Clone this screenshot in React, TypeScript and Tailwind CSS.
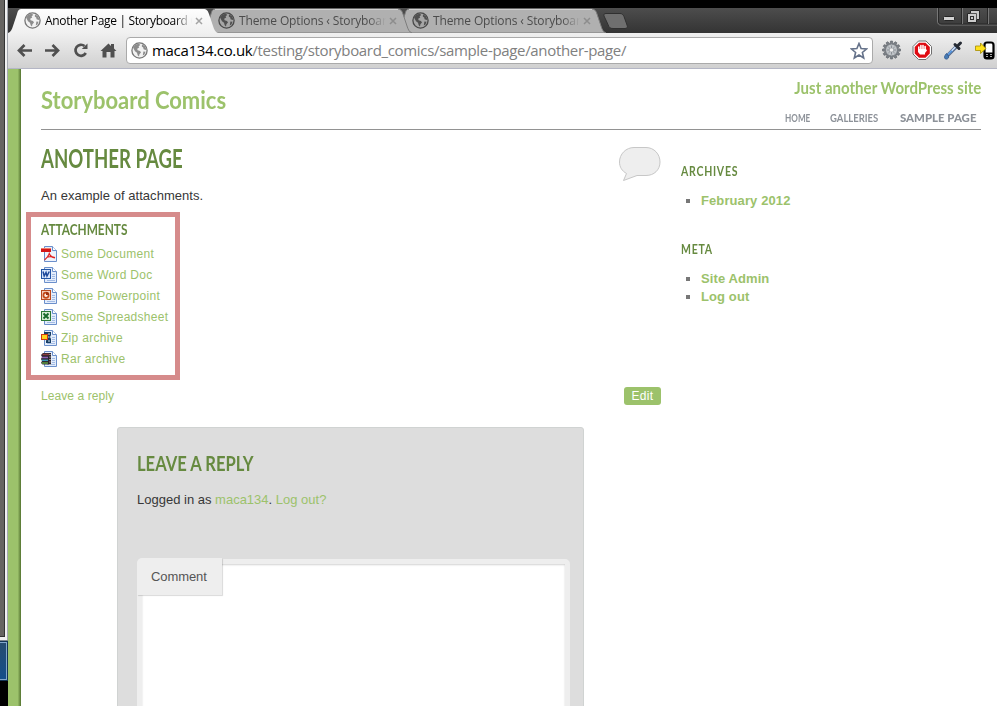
import React from 'react';

const ui = "font-['Open_Sans','Noto_Sans',sans-serif]";
const hand = "font-['Lato','Open_Sans',sans-serif]";

function Globe({ dark = false }: { dark?: boolean }) {
  return (
    <svg width="17" height="17" viewBox="0 0 17 17" className="shrink-0">
      <circle cx="8.5" cy="8.5" r="7.6" fill={dark ? '#a6a6a6' : '#f2f2f2'} stroke={dark ? '#484848' : '#777'} strokeWidth="1.3" />
      <path d="M2 5.5 4.5 2.6 8 1.8 9.3 3 7.6 4.2 8.2 5.5 6.2 6.8 6.6 8.3 9 9 10 10.6 8.4 12.2 8 14.6 6.7 13.2 6 10.8 4 9.2Z M11 2.2 14 4.2 15.4 7.2 14.6 8 12.6 7.2 12.2 5.4 10.8 4.6Z M12.4 9.4 14.6 9.8 13.4 12.6 11.8 13.4Z" fill={dark ? '#505050' : '#8c8c8c'} />
    </svg>
  );
}

function Tab({ title, active = false, className = '' }: { title: string; active?: boolean; className?: string }) {
  return (
    <div className={`relative h-[25px] w-[210px] shrink-0 ${className}`}>
      <svg className="absolute inset-0" width="210" height="25" viewBox="0 0 210 25">
        <defs>
          <linearGradient id="tabOn" x1="0" y1="0" x2="0" y2="1">
            <stop offset="0" stopColor="#fdfdfd" />
            <stop offset="1" stopColor="#f0f0f0" />
          </linearGradient>
        </defs>
        <path
          d="M0 25 C3 24 4 21 5 18 L9 6 C10 2 11 1 14 1 H195 C199 1 200 3 201 6 L205 18 C206 21 207 24 210 25Z"
          fill={active ? 'url(#tabOn)' : '#b0b0b0'}
          stroke={active ? 'none' : '#7d7d7d'}
          strokeWidth="1"
        />
        {!active && <path d="M13 1.5H196" stroke="#cfcfcf" />}
      </svg>
      <div className="relative flex h-[25px] items-center pl-4">
        <Globe dark={!active} />
        <div
          className={`ml-[4px] w-[147px] overflow-hidden whitespace-nowrap text-[12px] leading-[20px] [mask-image:linear-gradient(to_right,black_88%,transparent_100%)] ${active ? 'tracking-[-0.34px] text-black' : 'tracking-[-0.13px] text-[#4c4c4c]'}`}
        >
          {title}
        </div>
        <svg width="8" height="8" viewBox="0 0 8 8" className="ml-[3px]">
          <path d="M1 1 7 7M7 1 1 7" stroke={active ? '#a3a3a3' : '#8d8d8d'} strokeWidth="1.5" />
        </svg>
      </div>
    </div>
  );
}

function TabStrip() {
  return (
    <div className="flex h-[25px] bg-linear-to-b from-[#4d4d4d] to-[#343434]">
      <Tab title="Another Page | Storyboard Comics" active className="z-20" />
      <Tab title="Theme Options ‹ Storyboard" className="z-10 ml-[-16px]" />
      <Tab title="Theme Options ‹ Storyboard" className="ml-[-16px]" />
      <svg width="28" height="25" viewBox="0 0 28 25" className="ml-[-5px]">
        <path d="M5 5.500H19C21 5.500 22 6.500 23 8.500L26 17C27 19 26 20.500 24 20.500H12C9 20.500 8 19.500 7 16.500L3 8C2.500 6.500 3 5.500 5 5.500Z" fill="#6f6f6f" stroke="#303030" />
      </svg>
      <svg width="62" height="20" viewBox="0 0 62 20" className="ml-auto">
        <path d="M2.500 0V13C2.500 16 4 17 6 17H62" fill="none" stroke="#777" />
        <path d="M3.500 0V13C3.500 15 5 16 7 16H62M26.500 0V16M52.500 0V16" fill="none" stroke="#282828" />
        <path d="M27.500 0V16M53.500 0V16" stroke="#777" />
        <rect x="8.500" y="8.500" width="11" height="4" rx="1" fill="#d2d2d2" stroke="#252525" />
        <path d="M35.500 2.500H44.500V11.500H41.500V14.500H32.500V5.500H35.500Z" fill="#ccc" stroke="#252525" />
        <path d="M35.500 5.500H41.500V11.500" fill="none" stroke="#555" />
        <rect x="35.500" y="8.500" width="3" height="3" fill="#ccc" stroke="#303030" />
      </svg>
    </div>
  );
}

function NavIcons() {
  return (
    <svg width="112" height="34" viewBox="6 0 112 34" fill="none" stroke="#505050" strokeWidth="2.7" className="shrink-0">
      <path d="M11 17.500H24M16.500 12 11 17.500 16.500 23" />
      <path d="M37 17.500H50M44.500 12 50 17.500 44.500 23" />
      <path d="M77.800 20A5.500 5.500 0 1 1 76.500 13" />
      <path d="M79.500 10.500V16H73.800Z" fill="#505050" stroke="none" />
      <path d="M92.500 18 100.500 10.500 103 13V11H106V15.500L108.500 18H106.500V24.500H102.500V19H98.500V24.500H94.500V18Z" fill="#505050" stroke="none" />
    </svg>
  );
}

const gearTeeth = [0, 30, 60, 90, 120, 150, 180, 210, 240, 270, 300, 330];

function ExtensionIcons() {
  return (
    <svg width="124" height="34" viewBox="0 0 124 34" className="shrink-0">
      {gearTeeth.map((angle) => (
        <path key={angle} d="M16.900 11.500 17.500 8H19.500L20.100 11.500Z" transform={`rotate(${angle} 18.500 17)`} fill="#7b8086" stroke="#5d6268" strokeWidth=".6" />
      ))}
      <circle cx="18.500" cy="17" r="6" fill="#bfc3c7" stroke="#7b8086" />
      <path d="M14 17H23M18.500 12.500V21.500M15.400 14 21.600 20M21.600 14 15.400 20" stroke="#8b9096" />
      <circle cx="18.500" cy="17" r="1.700" fill="#eee" />
      <path d="M45.500 8H53L58.500 13.500V21L53 26.500H45.500L40 21V13.500Z" fill="#fff" stroke="#6f6f6f" />
      <path d="M46 9.700H52.500L56.800 14V20.500L52.500 24.800H46L41.700 20.500V14Z" fill="#df0b12" />
      <path d="M45.800 17V14M47.900 16V12.500M50 16V12.500M52.100 17V13.500" stroke="#fff" strokeWidth="1.600" strokeLinecap="round" />
      <path d="M45 16H53L54 17.500 52 20V21.500H47L45 19Z" fill="#fff" />
      <path d="M74.500 22.500 83.500 13.500" stroke="#54698a" strokeWidth="3.600" />
      <path d="M75 21.500 82.500 14" stroke="#cfe4ff" strokeWidth="1.600" />
      <path d="M75 21.800 79 17.800" stroke="#4a90e0" strokeWidth="1.600" />
      <path d="M82 11.500 86 15.500M84.500 13 87.500 10" stroke="#252a33" strokeWidth="3" strokeLinecap="round" />
      <path d="M73.500 20.500C71.500 23 71 24 72 25.500S76.500 25.500 75.500 23Z" fill="#477bb4" stroke="#365e94" />
      <rect x="111.500" y="9.500" width="9" height="16" rx="2.500" fill="#fff" stroke="#000" strokeWidth="2.200" />
      <path d="M111.500 19.500H120.500V25H111.500Z" fill="#000" />
      <path d="M113 21.500H115M117 21.500H119M113 23.500H115M117 23.500H119" stroke="#aaa" />
      <path d="M102.500 13H107.500V10L113 15.500 107.500 20.500V17.500H102.500Z" fill="#ffe11b" stroke="#a48b00" strokeWidth=".8" />
    </svg>
  );
}

function Toolbar() {
  return (
    <div className="flex h-9 border-b border-[#b4b6c5] bg-linear-to-b from-[#f0f0f0] to-[#d0d0d0] pl-[6px]">
      <NavIcons />
      <div className="mt-1 flex h-[27px] w-[749px] items-center rounded-[4px] border border-[#aaa] bg-white pl-1">
        <Globe />
        <div className="mb-[2px] ml-[4px] whitespace-nowrap text-[15px] leading-6 tracking-[-0.33px] text-[#808080]">
          <span className="text-black">maca134.co.uk</span>/testing/storyboard_comics/sample-page/another-page/
        </div>
        <svg width="18" height="18" viewBox="0 0 18 18" className="mr-[4px] ml-auto">
          <path d="M9 1.500 11.100 6.600 16.500 7 12.400 10.500 13.700 16 9 13 4.300 16 5.600 10.500 1.500 7 6.900 6.600Z" fill="#fff" stroke="#65728a" strokeWidth="1.600" />
        </svg>
      </div>
      <ExtensionIcons />
    </div>
  );
}

function Sheet() {
  return (
    <g>
      <path d="M3.500 .5H11.500L15.500 4.500V15.500H3.500Z" fill="#e4edfb" stroke="#6b8fcb" />
      <path d="M11.500 .5V4.500H15.500" fill="#fff" stroke="#6b8fcb" />
      <path d="M11 7.500H14M11 9.500H14M11 11.500H14M6 13.500H14" stroke="#a3bbe4" />
    </g>
  );
}

function FileIcon({ kind }: { kind: string }) {
  return (
    <svg width="16" height="16" viewBox="0 0 16 16" className="shrink-0">
      <Sheet />
      {kind === 'pdf' && (
        <g>
          <path d="M4 6H15V15H4Z" fill="#eef3fc" />
          <rect y="2" width="10" height="4" fill="#d51616" />
          <path d="M0 2.500H10" stroke="#f17b68" />
          <path d="M3.500 14C6 12 8 9.500 8.500 6.500M8.500 8C9.500 10.500 11 11.500 14 12M5.500 11.500C8 10 11 10.500 14 11.500" fill="none" stroke="#e02020" strokeWidth="1.200" />
        </g>
      )}
      {kind === 'doc' && (
        <g>
          <rect x=".5" y="2.500" width="9" height="9" fill="#d8e6fc" stroke="#2355a5" />
          <path d="M2 4.500 3.200 9 5 5.500 6 9 8.300 4.500" fill="none" stroke="#1c479a" strokeWidth="1.500" />
        </g>
      )}
      {kind === 'ppt' && (
        <g>
          <rect x=".5" y="2.500" width="9" height="9" fill="#f3cdbb" stroke="#b94a21" />
          <circle cx="5" cy="7.200" r="2.600" fill="#fff0e8" stroke="#c44a1c" strokeWidth="1.700" />
          <path d="M5 7V4A3 3 0 0 1 8 7Z" fill="#9f3210" />
        </g>
      )}
      {kind === 'xls' && (
        <g>
          <rect x=".5" y="2.500" width="9" height="9" fill="#d7ecd5" stroke="#2b7935" />
          <path d="M2.500 4.500 7.500 9.500M7.500 4.500 2.500 9.500" stroke="#17692a" strokeWidth="1.900" />
        </g>
      )}
      {kind === 'zip' && (
        <g>
          <path d="M3 2H10V5L9 7 10 9V13H5V10.500L6.500 9V6L3 5Z" fill="#173d63" />
          <rect x=".5" y="4.500" width="6" height="5" fill="#ffd51e" stroke="#d03a14" />
          <path d="M7 4H9M7 7H8.500M7 11H9" stroke="#d9e6f1" />
        </g>
      )}
      {kind === 'rar' && (
        <g>
          <path d="M2 2H10V13.500H1.500L0 12 1 10 0 8 1 6 0 4Z" fill="#2c2430" />
          <path d="M1.500 3.500H8" stroke="#8b3d3d" strokeWidth="1.500" />
          <path d="M1 6.500H7" stroke="#8f62b5" strokeWidth="1.500" />
          <path d="M1 9.300H7" stroke="#3696bd" strokeWidth="1.500" />
          <path d="M1 12H7" stroke="#5c9d3c" strokeWidth="1.500" />
          <path d="M9 3V14" stroke="#f2ead5" strokeDasharray="1 1.500" />
        </g>
      )}
    </svg>
  );
}

const files = [
  ['pdf', 'Some Document'],
  ['doc', 'Some Word Doc'],
  ['ppt', 'Some Powerpoint'],
  ['xls', 'Some Spreadsheet'],
  ['zip', 'Zip archive'],
  ['rar', 'Rar archive'],
];

function SiteHeader() {
  return (
    <header className={`flex h-[61px] w-[940px] justify-between border-b border-[#929292] ${hand}`}>
      <div className="mt-[15px] h-8 w-[185px] origin-left scale-x-[0.915] whitespace-nowrap text-[24px] leading-8 font-bold text-[#9cc26b]">Storyboard Comics</div>
      <div className="flex flex-col items-end">
        <div className="mt-[7px] h-6 origin-right scale-x-[0.885] text-[17px] leading-6 font-bold whitespace-nowrap text-[#9cc26b]">Just another WordPress site</div>
        <nav className="mt-2 mr-1 flex gap-5 text-[12px] leading-5 text-[#8d9299]">
          <span className="w-[25px] origin-left scale-x-[0.68] font-bold">HOME</span>
          <span className="w-[50px] origin-left scale-x-[0.79] font-bold">GALLERIES</span>
          <span className="w-[77px] origin-left scale-x-[0.95] font-black whitespace-nowrap">SAMPLE PAGE</span>
        </nav>
      </div>
    </header>
  );
}

function Attachments() {
  return (
    <section className="-ml-[15px] h-[168px] w-[154px] border-[5px] border-[#d68b8b] pl-[10px]">
      <h2 className={`h-[26px] w-[100px] origin-left scale-x-[0.74] text-[16px] leading-[24px] font-bold text-[#668a40] ${hand}`}>ATTACHMENTS</h2>
      <ul>
        {files.map(([kind, name]) => (
          <li key={name} className="flex h-[21px] items-center gap-1 text-[12px] tracking-[0.29px] whitespace-nowrap text-[#9cc26b]">
            <FileIcon kind={kind} />
            <a>{name}</a>
          </li>
        ))}
      </ul>
    </section>
  );
}

function ReplyForm() {
  return (
    <section className="mt-[15px] ml-[76px] h-[300px] w-[467px] rounded-[3px] border border-[#d0d3d2] bg-[#ddd] pl-[19px]">
      <h2 className={`mt-[19px] h-8 w-[200px] origin-left scale-x-[0.79] text-[21px] leading-8 font-bold text-[#668a40] ${hand}`}>LEAVE A REPLY</h2>
      <p className="mt-[11px] h-5 text-[13px] leading-5 text-[#373737]">
        Logged in as <span className="text-[#9cc26b]">maca134</span>. <span className="text-[#9cc26b]">Log out?</span>
      </p>
      <div className="mt-[49px] h-[200px] w-[433px] rounded-[5px] border-[5px] border-[#eee] bg-white shadow-[inset_0_1px_2px_rgba(0,0,0,0.18)]">
        <label className="-mt-[6px] -ml-[5px] flex h-[37px] w-[85px] items-center rounded-tl-[5px] bg-[#eee] pl-[14px] text-[13px] tracking-[-0.1px] text-[#555] shadow-[1px_1px_1px_rgba(0,0,0,0.15)]">Comment</label>
      </div>
    </section>
  );
}

function Main() {
  return (
    <main className="w-[620px]">
      <div className="flex h-[46px] justify-between">
        <h1 className={`mt-[11px] h-[34px] w-[200px] origin-left scale-x-[0.715] text-[26px] leading-[34px] font-bold whitespace-nowrap text-[#668a40] ${hand}`}>ANOTHER PAGE</h1>
        <svg width="42" height="35" viewBox="0 0 42 35" className="mt-[17px] shrink-0">
          <path d="M15 .5H27C35 .5 41 7 41 15S35 28.500 27 28.500H18L4.500 33.500 7.500 26.500C3 24 .5 20 .5 15 .5 7 7 .5 15 .5Z" fill="#eee" stroke="#c7c7c7" />
        </svg>
      </div>
      <p className="h-9 pt-[10px] text-[13px] leading-5 tracking-[0.04px] text-[#373737]">An example of attachments.</p>
      <Attachments />
      <div className="flex h-8 justify-between text-[12px] leading-8 text-[#9cc26b]">
        <a className="tracking-[0.08px]">Leave a reply</a>
        <span className="mt-[7px] h-[18px] w-[37px] rounded-[3px] bg-[#9cc26b] text-center leading-[18px] tracking-[0.3px] text-white">Edit</span>
      </div>
      <ReplyForm />
    </main>
  );
}

function Widget({ title, items }: { title: string; items: string[] }) {
  return (
    <section className="mb-[29px]">
      <h3 className={`h-5 origin-left scale-x-[0.75] text-[14px] leading-5 font-bold tracking-[1px] text-[#668a40] ${hand}`}>{title}</h3>
      <ul className="mt-[11px]">
        {items.map((item) => (
          <li key={item} className="flex h-[18px] items-center text-[13px] leading-[18px] font-bold tracking-[0.1px] text-[#9cc26b]">
            <span className="mr-[11px] ml-[5px] size-1 bg-[#777]" />
            {item}
          </li>
        ))}
      </ul>
    </section>
  );
}

function DesktopEdge() {
  return (
    <div className="flex w-2 shrink-0 flex-col bg-black">
      <div className="flex h-[641px] border-b border-[#7d858e] bg-[#f0f0f0]">
        <div className="h-[637px] w-[5px] border-r border-b border-[#333] bg-[#666461]" />
        <div className="ml-auto w-px bg-[#a5a8b0]" />
      </div>
      <div className="h-[40px] border border-l-0 border-[#123456] bg-[#123456]">
        <div className="h-full border border-l-0 border-[#82a7cb] bg-linear-to-b from-[#254c70] to-[#134e8a]" />
      </div>
    </div>
  );
}

export default function App() {
  return (
    <div className="flex h-[706px] w-[997px] overflow-hidden bg-black">
      <DesktopEdge />
      <div className={`flex w-[989px] flex-col pt-2 ${ui}`}>
        <TabStrip />
        <Toolbar />
        <div className="flex h-[637px] overflow-hidden bg-white font-['Liberation_Sans',Arial,sans-serif]">
          <div className="h-full w-[13px] shrink-0 bg-linear-to-r from-[#9cc26b] from-75% to-[#547330]" />
          <div className="pl-5">
            <SiteHeader />
            <div className="flex">
              <Main />
              <aside className="ml-5 w-[300px] pt-[31px]">
                <Widget title="ARCHIVES" items={['February 2012']} />
                <Widget title="META" items={['Site Admin', 'Log out']} />
              </aside>
            </div>
          </div>
        </div>
      </div>
    </div>
  );
}
